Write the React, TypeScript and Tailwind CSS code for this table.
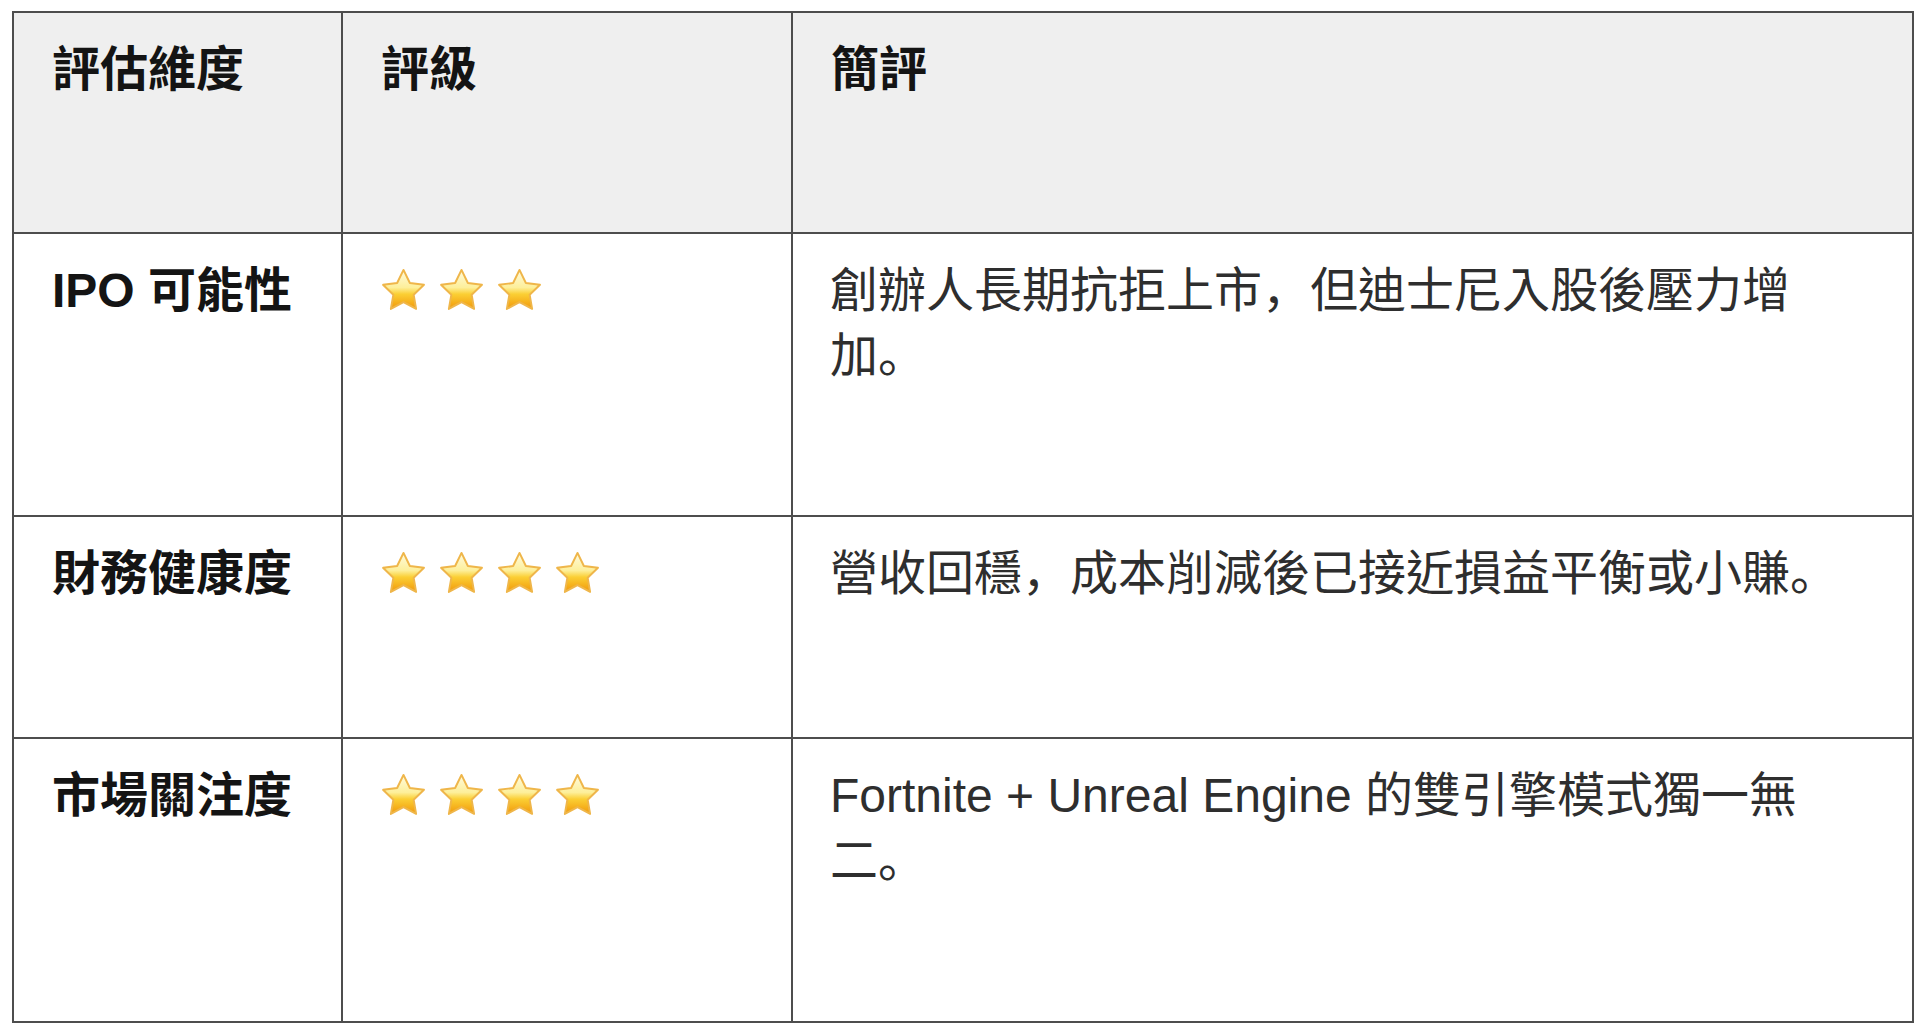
import React from "react";

function Star() {
  return (
    <svg width="47" height="47" viewBox="0 0 48 48" className="shrink-0">
      <defs>
        <linearGradient id="sg" x1="0" y1="0" x2="0" y2="1">
          <stop offset="0" stopColor="#fffbe0" />
          <stop offset="0.45" stopColor="#fdef9a" />
          <stop offset="0.62" stopColor="#fbcf34" />
          <stop offset="1" stopColor="#f1980a" />
        </linearGradient>
      </defs>
      <path
        d="M24 3 L30.5 16.3 L44.9 18.2 L34.4 28.4 L36.9 42.8 L24 35.8 L11.1 42.8 L13.6 28.4 L3.1 18.2 L17.5 16.3 Z"
        fill="url(#sg)"
        stroke="#efb64a"
        strokeWidth="2"
        strokeLinejoin="round"
      />
    </svg>
  );
}

function Stars({ n }: { n: number }) {
  return (
    <div className="flex gap-[11px] pt-[9px]">
      {Array.from({ length: n }).map((_, i) => (
        <Star key={i} />
      ))}
    </div>
  );
}

function P({ c }: { c: string }) {
  return <span className="leading-none font-['Noto_Sans_CJK_JP',sans-serif]">{c}</span>;
}

const rows = [
  {
    dim: "IPO 可能性",
    stars: 3,
    note: (
      <>
        創辦人長期抗拒上市<P c="，" />但迪士尼入股後壓力增加<P c="。" />
      </>
    ),
    h: "h-[283px]",
  },
  {
    dim: "財務健康度",
    stars: 4,
    note: (
      <>
        營收回穩<P c="，" />成本削減後已接近損益平衡或小賺<P c="。" />
      </>
    ),
    h: "h-[222px]",
  },
  {
    dim: "市場關注度",
    stars: 4,
    note: (
      <>
        Fortnite + Unreal Engine 的雙引擎模式獨一無二<P c="。" />
      </>
    ),
    h: "h-[284px]",
  },
];

export default function App() {
  return (
    <div className="min-h-[1033px] w-[1920px] bg-white pt-[11px] pl-[12px] font-['Liberation_Sans','Noto_Sans_CJK_TC',sans-serif]">
      <table className="w-[1902px] border-collapse table-fixed text-[48px] leading-[65px]">
        <colgroup>
          <col className="w-[329px]" />
          <col className="w-[450px]" />
          <col />
        </colgroup>
        <thead>
          <tr className="h-[221px] bg-[#efefef]">
            <th className="border-2 border-[#4d4d4d] align-top text-left font-bold text-[#141414] pt-[24px] pl-[38px]">評估維度</th>
            <th className="border-2 border-[#4d4d4d] align-top text-left font-bold text-[#141414] pt-[24px] pl-[38px]">評級</th>
            <th className="border-2 border-[#4d4d4d] align-top text-left font-bold text-[#141414] pt-[24px] pl-[38px]">簡評</th>
          </tr>
        </thead>
        <tbody>
          {rows.map((r) => (
            <tr key={r.dim} className={r.h}>
              <td className="border-2 border-[#4d4d4d] align-top font-bold text-[#141414] pt-[24px] pl-[38px] pr-[20px]">{r.dim}</td>
              <td className="border-2 border-[#4d4d4d] align-top pt-[24px] pl-[37px]">
                <Stars n={r.stars} />
              </td>
              <td className="border-2 border-[#4d4d4d] align-top text-[#2e2e2e] pt-[24px] pl-[37px] pr-[40px]">{r.note}</td>
            </tr>
          ))}
        </tbody>
      </table>
    </div>
  );
}
